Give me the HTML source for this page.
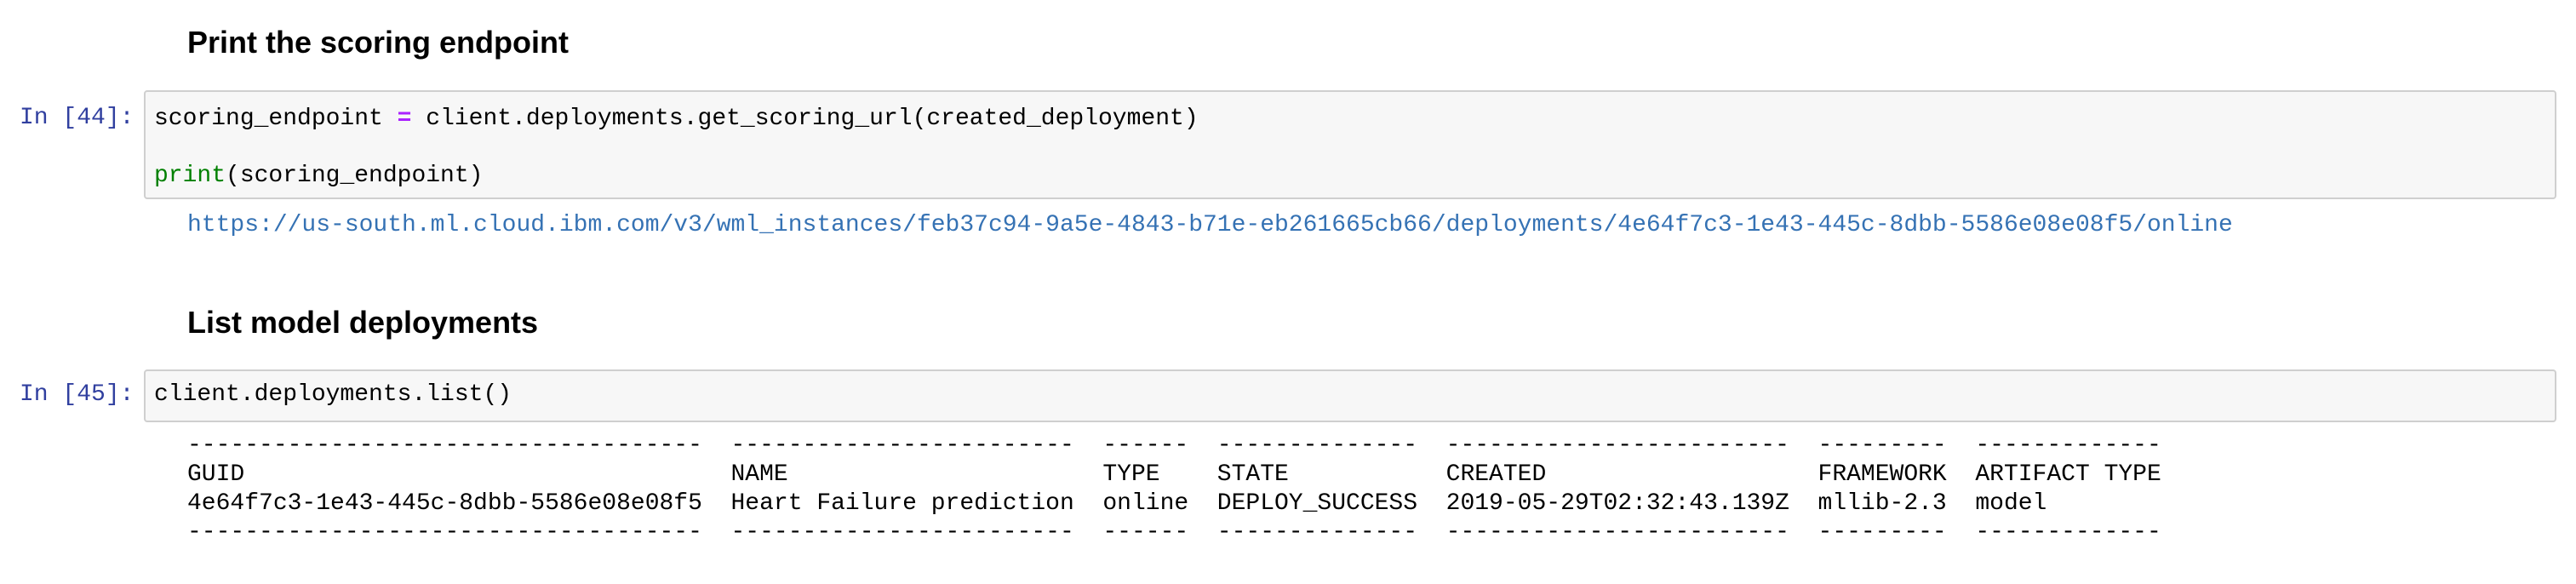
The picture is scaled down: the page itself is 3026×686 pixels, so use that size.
<!DOCTYPE html>
<html><head><meta charset="utf-8"><style>
html,body{margin:0;padding:0;background:#fff;width:3026px;height:686px;overflow:hidden;position:relative}
.a{position:absolute;white-space:pre;margin:0}
.h{font-family:"Liberation Sans",Arial,sans-serif;font-weight:bold;font-size:36px;line-height:40px;color:#000}
.m{font-family:"Liberation Mono","DejaVu Sans Mono",monospace;font-size:28px;line-height:34px;color:#000}
.p{color:#303F9F}
.box{position:absolute;left:169px;width:2834px;background:#f7f7f7;border:2px solid #cfcfcf;border-radius:4px;box-sizing:border-box}
.k{color:#008000}
.o{color:#AA22FF;font-weight:bold}
.u{color:#3572b4}
</style></head><body>
<div class="a h" style="left:220px;top:30px">Print the scoring endpoint</div>
<div class="box" style="top:106px;height:128px"></div>
<div class="a m p" style="left:23px;top:122px">In [44]:</div>
<div class="a m" style="left:181px;top:123px;line-height:33.5px">scoring_endpoint <span class="o">=</span> client.deployments.get_scoring_url(created_deployment)

<span class="k">print</span>(scoring_endpoint)</div>
<div class="a m u" style="left:220px;top:248px">https://us-south.ml.cloud.ibm.com/v3/wml_instances/feb37c94-9a5e-4843-b71e-eb261665cb66/deployments/4e64f7c3-1e43-445c-8dbb-5586e08e08f5/online</div>
<div class="a h" style="left:220px;top:359px">List model deployments</div>
<div class="box" style="top:434px;height:62px"></div>
<div class="a m p" style="left:23px;top:447px">In [45]:</div>
<div class="a m" style="left:181px;top:447px">client.deployments.list()</div>
<div class="a m" style="left:220px;top:507px">------------------------------------  ------------------------  ------  --------------  ------------------------  ---------  -------------
GUID                                  NAME                      TYPE    STATE           CREATED                   FRAMEWORK  ARTIFACT TYPE
4e64f7c3-1e43-445c-8dbb-5586e08e08f5  Heart Failure prediction  online  DEPLOY_SUCCESS  2019-05-29T02:32:43.139Z  mllib-2.3  model
------------------------------------  ------------------------  ------  --------------  ------------------------  ---------  -------------</div>
</body></html>
